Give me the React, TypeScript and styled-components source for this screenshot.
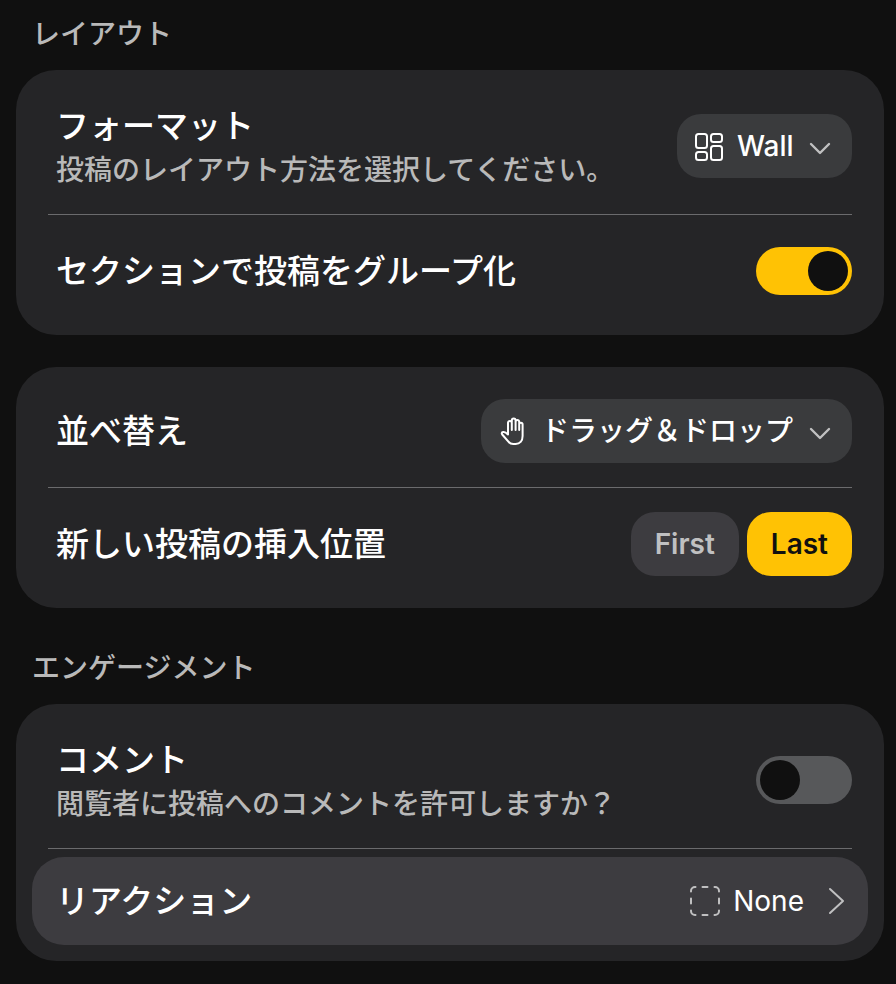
import { useState } from "react";
import type { ReactNode } from "react";
import styled, { createGlobalStyle, css } from "styled-components";

const GlobalStyle = createGlobalStyle`
  *, *::before, *::after { box-sizing: border-box; }
  body {
    margin: 0;
    background: #101010;
    color: #fff;
    font-family: Inter, "Noto Sans CJK JP", sans-serif;
    -webkit-font-smoothing: antialiased;
  }
  button, select, input { font: inherit; color: inherit; margin: 0; }
`;

const Page = styled.main`
  padding: 14px 12px 23px 16px;
`;

const Section = styled.section`
  & + & { margin-top: 40px; }
`;

const Heading = styled.h2`
  margin: 0 0 16px;
  padding: 0 16px;
  font-size: 28px;
  line-height: 40px;
  font-weight: 500;
  color: #b9b9b9;
`;

const Card = styled.div`
  padding: 8px 16px;
  border-radius: 40px;
  background: #252527;
  & + & { margin-top: 32px; }
`;

const Row = styled.div<{ $tall?: boolean }>`
  display: flex;
  align-items: center;
  justify-content: space-between;
  gap: 16px;
  min-height: ${(p) => (p.$tall ? 136 : 112)}px;
  padding: 0 16px 0 24px;
`;

const Divider = styled.hr`
  height: 1px;
  margin: 0 16px;
  border: 0;
  background: #6b6b6d;
`;

const TextBlock = styled.div`
  display: flex;
  flex-direction: column;
`;

const titleText = css`
  font-size: 33px;
  line-height: 48px;
  font-weight: 500;
`;

const Title = styled.label`
  ${titleText}
`;

const GroupTitle = styled.span`
  ${titleText}
`;

const Description = styled.p`
  margin: 0;
  font-size: 28px;
  line-height: 40px;
  font-weight: 500;
  color: #b9b9b9;
`;

const Pill = styled.div`
  display: flex;
  align-items: center;
  height: 64px;
  padding: 0 16px;
  border-radius: 24px;
  background: #3a3b3d;
`;

const Select = styled.select`
  appearance: none;
  margin: 0 10px 0 12px;
  padding: 0;
  border: 0;
  outline: 0;
  background: transparent;
  font-size: 28px;
  line-height: 40px;
  font-weight: 500;
  cursor: pointer;
`;

const Icon = styled.svg<{ $muted?: boolean }>`
  flex: none;
  width: 32px;
  height: 32px;
  fill: none;
  stroke: ${(p) => (p.$muted ? "#c0c0c1" : "#fff")};
  stroke-width: 2;
  stroke-linecap: round;
  stroke-linejoin: round;
`;

const Switch = styled.input`
  appearance: none;
  flex: none;
  width: 96px;
  height: 48px;
  padding: 4px;
  border-radius: 24px;
  background: #57585a;
  cursor: pointer;

  &::before {
    content: "";
    display: block;
    width: 40px;
    height: 40px;
    border-radius: 50%;
    background: #101010;
  }
  &:checked { background: #ffc204; }
  &:checked::before { margin-left: auto; }
`;

const Choices = styled.div`
  display: flex;
  gap: 8px;
`;

const Choice = styled.button<{ $active: boolean }>`
  height: 64px;
  padding: 0 24px;
  border: 0;
  border-radius: 24px;
  font-size: 28px;
  line-height: 40px;
  font-weight: 600;
  background: ${(p) => (p.$active ? "#ffc204" : "#3d3c40")};
  color: ${(p) => (p.$active ? "#101010" : "#c0c0c1")};
  cursor: pointer;
`;

const LinkRow = styled.button`
  display: flex;
  align-items: center;
  width: 100%;
  height: 88px;
  margin: 8px 0;
  padding: 0 16px 0 24px;
  border: 0;
  border-radius: 32px;
  background: #3d3c40;
  text-align: left;
  cursor: pointer;
`;

const LinkTitle = styled.span`
  ${titleText}
  flex: 1;
`;

const LinkValue = styled.span`
  margin: 0 16px 0 12px;
  font-size: 28px;
  line-height: 40px;
`;

const WallIcon = () => (
  <Icon viewBox="0 0 32 32" aria-hidden="true">
    <rect x="3" y="4" width="11" height="14" rx="2.5" />
    <rect x="18" y="4" width="11" height="8" rx="2.5" />
    <rect x="3" y="22" width="11" height="8" rx="2.5" />
    <rect x="18" y="16" width="11" height="14" rx="2.5" />
  </Icon>
);

const HandIcon = () => (
  <Icon viewBox="0 0 32 32" aria-hidden="true">
    <path d="M11 19.5V7.8a1.9 1.9 0 0 1 3.8 0V15M14.8 7V5.4a1.9 1.9 0 0 1 3.8 0V15M18.6 6.8a1.8 1.8 0 0 1 3.6 0V15M22.2 9.4a1.7 1.7 0 0 1 3.4 0V21c0 5-2.8 8-7 8h-2.4c-2.2 0-3.6-.8-4.8-2.3l-6.2-7.2c-.8-1-.4-2.2.7-2.5 1.6-.5 3.3.6 5.1 2.5" />
  </Icon>
);

const DownIcon = () => (
  <Icon $muted viewBox="0 0 32 32" aria-hidden="true">
    <path d="M7 14l9 9 9-9" strokeWidth="2.4" />
  </Icon>
);

const DashedIcon = () => (
  <Icon $muted viewBox="0 0 32 32" aria-hidden="true">
    <path d="M2 6.500V6a4 4 0 0 1 4-4h.5M13.500 2h5M25.500 2h.5a4 4 0 0 1 4 4v.5M30 13.500v5M30 25.500v.5a4 4 0 0 1-4 4h-.5M18.500 30h-5M6.500 30H6a4 4 0 0 1-4-4v-.5M2 18.500v-5" />
  </Icon>
);

const RightIcon = () => (
  <Icon $muted viewBox="0 0 32 32" aria-hidden="true">
    <path d="M10 4l13 12-13 12" />
  </Icon>
);

type DropdownProps = { id: string; icon: ReactNode; value: string };

const Dropdown = ({ id, icon, value }: DropdownProps) => (
  <Pill>
    {icon}
    <Select id={id} defaultValue={value}>
      <option value={value}>{value}</option>
    </Select>
    <DownIcon />
  </Pill>
);

const positions = ["First", "Last"];

export default function App() {
  const [grouped, setGrouped] = useState(true);
  const [comments, setComments] = useState(false);
  const [position, setPosition] = useState("Last");

  return (
    <>
      <GlobalStyle />
      <Page lang="ja">
        <Section>
          <Heading>レイアウト</Heading>
          <Card>
            <Row $tall>
              <TextBlock>
                <Title htmlFor="format">フォーマット</Title>
                <Description>投稿のレイアウト方法を選択してください。</Description>
              </TextBlock>
              <Dropdown id="format" icon={<WallIcon />} value="Wall" />
            </Row>
            <Divider />
            <Row>
              <Title htmlFor="grouped">セクションで投稿をグループ化</Title>
              <Switch
                id="grouped"
                type="checkbox"
                role="switch"
                checked={grouped}
                onChange={(e) => setGrouped(e.target.checked)}
              />
            </Row>
          </Card>
          <Card>
            <Row>
              <Title htmlFor="sort">並べ替え</Title>
              <Dropdown id="sort" icon={<HandIcon />} value="ドラッグ＆ドロップ" />
            </Row>
            <Divider />
            <Row>
              <GroupTitle id="position">新しい投稿の挿入位置</GroupTitle>
              <Choices role="group" aria-labelledby="position">
                {positions.map((name) => (
                  <Choice
                    key={name}
                    type="button"
                    $active={position === name}
                    aria-pressed={position === name}
                    onClick={() => setPosition(name)}
                  >
                    {name}
                  </Choice>
                ))}
              </Choices>
            </Row>
          </Card>
        </Section>
        <Section>
          <Heading>エンゲージメント</Heading>
          <Card>
            <Row $tall>
              <TextBlock>
                <Title htmlFor="comments">コメント</Title>
                <Description>閲覧者に投稿へのコメントを許可しますか？</Description>
              </TextBlock>
              <Switch
                id="comments"
                type="checkbox"
                role="switch"
                checked={comments}
                onChange={(e) => setComments(e.target.checked)}
              />
            </Row>
            <Divider />
            <LinkRow type="button">
              <LinkTitle>リアクション</LinkTitle>
              <DashedIcon />
              <LinkValue>None</LinkValue>
              <RightIcon />
            </LinkRow>
          </Card>
        </Section>
      </Page>
    </>
  );
}
